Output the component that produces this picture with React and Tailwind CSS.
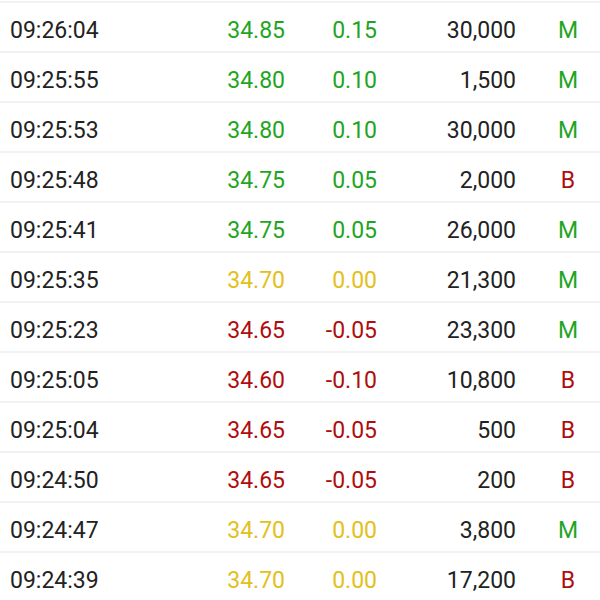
import React from "react";

const rows = [
  ["09:26:04", "34.85", "0.15", "30,000", "M", "g"],
  ["09:25:55", "34.80", "0.10", "1,500", "M", "g"],
  ["09:25:53", "34.80", "0.10", "30,000", "M", "g"],
  ["09:25:48", "34.75", "0.05", "2,000", "B", "g"],
  ["09:25:41", "34.75", "0.05", "26,000", "M", "g"],
  ["09:25:35", "34.70", "0.00", "21,300", "M", "y"],
  ["09:25:23", "34.65", "-0.05", "23,300", "M", "r"],
  ["09:25:05", "34.60", "-0.10", "10,800", "B", "r"],
  ["09:25:04", "34.65", "-0.05", "500", "B", "r"],
  ["09:24:50", "34.65", "-0.05", "200", "B", "r"],
  ["09:24:47", "34.70", "0.00", "3,800", "M", "y"],
  ["09:24:39", "34.70", "0.00", "17,200", "B", "y"],
];

const colorClass = {
  g: "text-[#1fa51f]",
  y: "text-[#e3c020]",
  r: "text-[#b00d0d]",
};

export default function App() {
  return (
    <div
      className="w-[600px] h-[600px] overflow-hidden bg-white pt-[1px]"
      style={{ fontFamily: "Roboto, 'Noto Sans', sans-serif" }}
    >
      {rows.map((r, i) => (
        <div
          key={i}
          className="grid grid-cols-[200px_85px_92px_139px_1fr] h-[50px] pt-[6px] items-center border-t-2 border-[#f2f2f2] text-[23px] leading-none"
        >
          <div className="pl-[10px] text-[#222222]">{r[0]}</div>
          <div className={`text-right ${colorClass[r[5]]}`}>{r[1]}</div>
          <div className={`text-right ${colorClass[r[5]]}`}>{r[2]}</div>
          <div className="text-right text-[#222222]">{r[3]}</div>
          <div
            className={`pl-[20px] text-center ${
              r[4] === "M" ? "text-[#1fa51f]" : "text-[#b00d0d]"
            }`}
          >
            {r[4]}
          </div>
        </div>
      ))}
    </div>
  );
}
